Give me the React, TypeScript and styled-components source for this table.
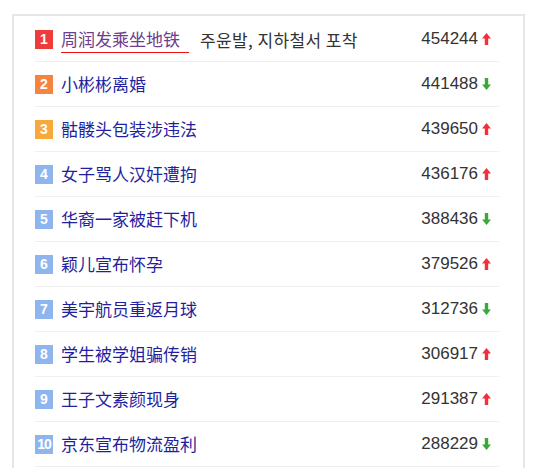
import React from "react";
import styled, { createGlobalStyle } from "styled-components";

const Global = createGlobalStyle`
  html, body { margin: 0; padding: 0; background: #fff; }
  body { font-family: "Liberation Sans", Arial, "Noto Sans CJK SC", sans-serif; }
`;

const Panel = styled.div`
  margin: 14px 0 0 12px;
  width: 513px;
  height: 460px;
  border: 2px solid #e6e6e6;
  border-bottom: none;
  padding: 1px 24px 0 21px;
  box-sizing: border-box;
  background: #fff;
  overflow: hidden;
`;

const List = styled.ol`
  list-style: none;
  margin: 0;
  padding: 0;
`;

const Row = styled.li`
  display: flex;
  align-items: center;
  height: 44px;
  border-bottom: 1px solid #f0f0f0;
  padding-right: 8px;
`;

const badgeColors = ["#f03b3b", "#f5843f", "#f8a93c"];

const Badge = styled.span<{ $rank: number }>`
  flex: none;
  width: 18px;
  height: 19px;
  display: flex;
  align-items: center;
  justify-content: center;
  background: ${(p) => badgeColors[p.$rank - 1] ?? "#8fb5ef"};
  color: #fff;
  font-family: "Liberation Sans", Arial, sans-serif;
  font-weight: bold;
  font-size: 14px;
  letter-spacing: ${(p) => (p.$rank >= 10 ? "-1px" : "0")};
  margin-right: 8px;
`;

const Title = styled.span<{ $visited?: boolean; $active?: boolean }>`
  font-family: "Noto Sans CJK SC", sans-serif;
  font-size: 17px;
  color: ${(p) => (p.$visited ? "#6e3d8e" : "#1f1fa0")};
  line-height: 20px;
  padding-right: ${(p) => (p.$active ? "9px" : "0")};
  border-bottom: ${(p) => (p.$active ? "1px solid #f01010" : "none")};
  padding-bottom: ${(p) => (p.$active ? "3px" : "0")};
  margin-top: ${(p) => (p.$active ? "4px" : "0")};
`;

const Sub = styled.span`
  font-family: "Noto Sans CJK KR", sans-serif;
  font-size: 17px;
  letter-spacing: 0.4px;
  color: #333;
  margin-left: 11px;
`;

const Count = styled.span`
  margin-left: auto;
  font-family: "Liberation Sans", Arial, sans-serif;
  font-size: 17px;
  color: #333;
`;

const ArrowBox = styled.span`
  display: flex;
  width: 9px;
  margin-left: 4px;
`;

const Arrow = ({ up }: { up: boolean }) => (
  <ArrowBox>
    <svg width="9" height="12" viewBox="0 0 9 12" style={{ transform: up ? "none" : "rotate(180deg)" }}>
      <path d="M4.5 0 L9 5.5 L6.2 5.5 L6.2 12 L2.8 12 L2.8 5.5 L0 5.5 Z" fill={up ? "#f2303a" : "#3aa93a"} />
    </svg>
  </ArrowBox>
);

const items = [
  { t: "周润发乘坐地铁", n: "454244", up: true, sub: "주윤발, 지하철서 포착" },
  { t: "小彬彬离婚", n: "441488", up: false },
  { t: "骷髅头包装涉违法", n: "439650", up: true },
  { t: "女子骂人汉奸遭拘", n: "436176", up: true },
  { t: "华裔一家被赶下机", n: "388436", up: false },
  { t: "颖儿宣布怀孕", n: "379526", up: true },
  { t: "美宇航员重返月球", n: "312736", up: false },
  { t: "学生被学姐骗传销", n: "306917", up: true },
  { t: "王子文素颜现身", n: "291387", up: true },
  { t: "京东宣布物流盈利", n: "288229", up: false },
];

export default function App() {
  return (
    <>
      <Global />
      <Panel>
        <List>
          {items.map((it, i) => (
            <Row key={i}>
              <Badge $rank={i + 1}>{i + 1}</Badge>
              <Title $visited={i === 0} $active={i === 0}>{it.t}</Title>
              {it.sub && <Sub>{it.sub}</Sub>}
              <Count>{it.n}</Count>
              <Arrow up={it.up} />
            </Row>
          ))}
        </List>
      </Panel>
    </>
  );
}
